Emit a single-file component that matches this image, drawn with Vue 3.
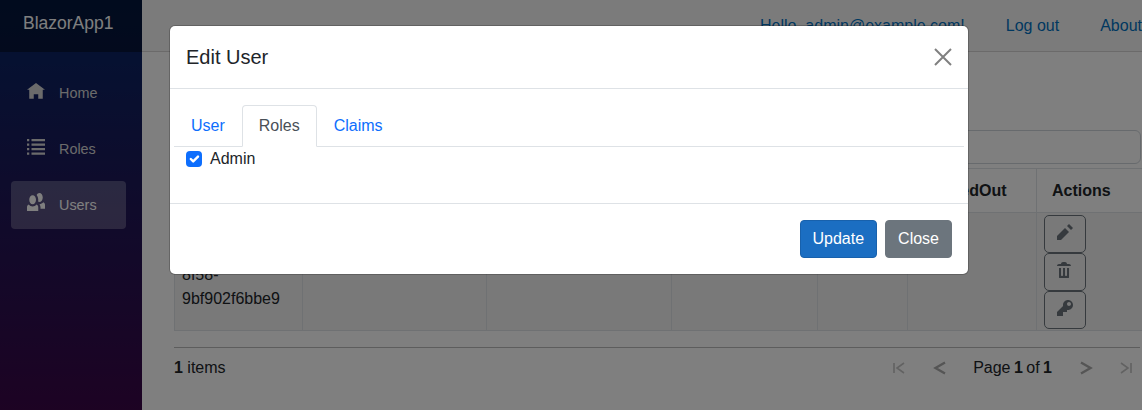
<script setup>
const columns = [
  { label: 'Id', width: 128 },
  { label: 'UserName', width: 184 },
  { label: 'Email', width: 185 },
  { label: 'Phone', width: 146 },
  { label: '2FA', width: 90 },
  { label: 'LockedOut', width: 129 },
  { label: 'Actions', width: 106 }
]
const icons = {
  pencil: 'M6 0l-1 1 2 2 1-1-2-2zm-2 2l-4 4v2h2l4-4-2-2z',
  trash: 'M3 0c-.55 0-1 .45-1 1h-1c-.55 0-1 .45-1 1h7c0-.55-.45-1-1-1h-1c0-.55-.45-1-1-1h-1zm-2 3v4.81c0 .11.08.19.19.19h4.63c.11 0 .19-.08.19-.19v-4.81h-1v3.5c0 .28-.22.5-.5.5s-.5-.22-.5-.5v-3.5h-1v3.5c0 .28-.22.5-.5.5s-.5-.22-.5-.5v-3.5h-1z',
  key: 'M5.5 0c-1.38 0-2.5 1.12-2.5 2.5 0 .16 0 .32.03.47l-3.03 3.03v2h3v-2h2v-1l.03-.03c.15.03.31.03.47.03 1.38 0 2.5-1.12 2.5-2.5s-1.12-2.5-2.5-2.5zm.5 1c.55 0 1 .45 1 1s-.45 1-1 1-1-.45-1-1 .45-1 1-1z'
}
const nav = [
  { label: 'Home', d: 'M4 0l-4 3h1v4h2v-2h2v2h2v-4.03l1 .03-4-3z', active: false },
  { label: 'Roles', d: 'M0 0h1v1h-1zm2 0h6v1h-6zm-2 2h1v1h-1zm2 0h6v1h-6zm-2 2h1v1h-1zm2 0h6v1h-6zm-2 2h1v1h-1zm2 0h6v1h-6z', active: false },
  { label: 'Users', d: 'M5.5 0c-.51 0-.95.35-1.22.88.45.54.72 1.28.72 2.13 0 .29-.03.55-.09.81.19.11.38.19.59.19.83 0 1.5-.9 1.5-2s-.67-2-1.5-2zm-3 1c-.83 0-1.5.9-1.5 2s.67 2 1.5 2 1.5-.9 1.5-2-.67-2-1.5-2zm4.750 3.160c-.43.51-1.020.82-1.690.84.27.38.44.84.44 1.340v.66h2v-1.660c0-.52-.31-.97-.75-1.190zm-6.500 1c-.44.22-.75.67-.75 1.190v1.660h5v-1.660c0-.52-.31-.97-.75-1.190-.45.53-1.060.84-1.750.84s-1.300-.32-1.750-.84z', active: true }
]
</script>

<template>
  <div class="page">
    <aside class="sidebar">
      <div class="brand">BlazorApp1</div>
      <nav class="nav">
        <a v-for="item in nav" :key="item.label" class="nav-link" :class="{ active: item.active }">
          <svg class="nav-icon" viewBox="0 0 8 8"><path :d="item.d" /></svg>
          {{ item.label }}
        </a>
      </nav>
    </aside>
    <main class="main">
      <header class="topbar">
        <a class="hello">Hello, admin@example.com!</a>
        <a class="logout">Log out</a>
        <a class="about">About</a>
      </header>
      <section class="content">
        <div class="title-space"></div>
        <div class="search"></div>
        <table class="grid">
          <colgroup>
            <col v-for="c in columns" :key="c.label" :style="{ width: c.width + 'px' }" />
          </colgroup>
          <thead>
            <tr><th v-for="c in columns" :key="c.label">{{ c.label }}</th></tr>
          </thead>
          <tbody>
            <tr>
              <td class="id">4c1e7a02-<br />52bd-<br />8f58-<br />9bf902f6bbe9</td>
              <td></td><td></td><td></td><td></td><td></td>
              <td class="actions">
                <button v-for="(d, name) in icons" :key="name" class="act">
                  <svg viewBox="0 0 8 8" class="act-icon"><path :d="d" /></svg>
                </button>
              </td>
            </tr>
          </tbody>
        </table>
        <div class="pager">
          <div><b>1</b> items</div>
          <div class="pages">
            <svg class="pg first" viewBox="0 0 14 14"><path d="M2 2v10M12 2 5 7l7 5" /></svg>
            <svg class="pg prev" viewBox="0 0 14 14"><path d="M12 1.500 2.500 7l9.500 5.500" /></svg>
            <span class="pagetext">Page <b>1</b> of <b>1</b></span>
            <svg class="pg next" viewBox="0 0 14 14"><path d="M2 1.500 11.500 7 2 12.500" /></svg>
            <svg class="pg last" viewBox="0 0 14 14"><path d="M2 2l7 5-7 5M12 2v10" /></svg>
          </div>
        </div>
      </section>
    </main>

    <div class="backdrop">
      <div class="modal">
        <div class="modal-header">
          <span class="modal-title">Edit User</span>
          <svg class="close" viewBox="0 0 18 18"><path d="M1 1l16 16M17 1 1 17" /></svg>
        </div>
        <div class="modal-body">
          <ul class="tabs">
            <li class="tab">User</li>
            <li class="tab on">Roles</li>
            <li class="tab">Claims</li>
          </ul>
          <label class="check">
            <span class="box">
              <svg viewBox="0 0 20 20"><path d="M6 10l3 3 6-6" /></svg>
            </span>
            Admin
          </label>
        </div>
        <div class="modal-footer">
          <button class="btn primary">Update</button>
          <button class="btn secondary">Close</button>
        </div>
      </div>
    </div>
  </div>
</template>

<style>
html, body { margin: 0; height: 100%; overflow: hidden; }
</style>

<style scoped>
.page {
  position: relative;
  display: flex;
  width: 1142px;
  height: 410px;
  overflow: hidden;
  font-family: "Liberation Sans", Arial, sans-serif;
  font-size: 16px;
  line-height: 24px;
  color: #212529;
  background: #fff;
}
.sidebar {
  flex: 0 0 142px;
  background: linear-gradient(180deg, #052767 0%, #3a0647 100%);
}
.brand {
  height: 52px;
  line-height: 47px;
  padding-left: 23px;
  font-size: 17.5px;
  color: #fff;
  background: rgba(0, 0, 0, .4);
}
.nav { padding: 13px 16px 0 11px; display: flex; flex-direction: column; gap: 8px; margin-top: 4px; }
.nav-link {
  display: flex;
  align-items: center;
  height: 48px;
  padding-left: 16px;
  border-radius: 4px;
  font-size: 14.4px;
  color: #d7d7d7;
}
.nav-link.active { background: rgba(255, 255, 255, .25); color: #fff; }
.nav-icon { width: 18px; height: 18px; margin: -3px 14px 0 0; fill: currentColor; }
.nav-link.active .nav-icon { margin-top: -6px; }
.main { flex: 1; min-width: 0; }
.topbar {
  display: flex;
  align-items: center;
  height: 52px;
  box-sizing: border-box;
  border-bottom: 1px solid #d6d5d5;
  background: #f7f7f7;
  padding-left: 618px;
  white-space: nowrap;
}
.topbar a { color: #0071c1; }
.hello { margin-right: 41px; }
.logout { margin-right: 41px; }
.content { padding: 0 0 0 32px; }
.title-space { height: 78px; }
.search {
  box-sizing: border-box;
  width: 967px;
  height: 34px;
  border: 1px solid #ced4da;
  border-radius: 6px;
}
.grid {
  margin-top: 4px;
  table-layout: fixed;
  border-collapse: collapse;
  width: 968px;
}
.grid th, .grid td {
  border: 1px solid #dee2e6;
  padding: 0;
  vertical-align: top;
}
.grid th {
  height: 43px;
  padding: 0 15px;
  text-align: left;
  vertical-align: middle;
  font-weight: 700;
}
.grid tbody tr { background: rgba(0, 0, 0, .05); }
.grid td.id { padding: 2px 7px 0; }
.grid td.actions { padding: 2px 7px 1px; }
.act {
  display: block;
  box-sizing: border-box;
  width: 42px;
  height: 38px;
  padding: 0;
  border: 1px solid #6c757d;
  border-radius: 5px;
  background: transparent;
}
.act-icon { display: block; width: 16px; height: 16px; margin: -4px auto 0; fill: #6c757d; }
.pager {
  display: flex;
  align-items: center;
  justify-content: space-between;
  box-sizing: border-box;
  width: 966px;
  height: 40px;
  margin-top: 16px;
  padding: 0 7px 0 0;
  border-top: 1px solid #bbb;
}
.pages { display: flex; align-items: center; }
.pagetext { margin: 0 27px 0 26px; word-spacing: -1px; }
.pg { width: 14px; height: 14px; fill: none; stroke: #aaa; stroke-width: 2.4; }
.first { margin-right: 27px; stroke: #c4c4c4; stroke-width: 1.6; }
.last { margin-left: 26px; stroke: #c4c4c4; stroke-width: 1.6; }
.backdrop {
  position: absolute;
  inset: 0;
  background: rgba(0, 0, 0, .5);
  padding: 26px 0 0 170px;
}
.modal {
  box-sizing: border-box;
  width: 798px;
  height: 248px;
  display: flex;
  flex-direction: column;
  background: #fff;
  border-radius: 5px;
  box-shadow: 0 0 0 1px rgba(0, 0, 0, .2);
}
.modal-header {
  display: flex;
  align-items: center;
  justify-content: space-between;
  height: 63px;
  box-sizing: border-box;
  padding: 0 16px;
  border-bottom: 1px solid #dee2e6;
}
.modal-title { font-size: 20px; }
.close { width: 18px; height: 18px; fill: none; stroke: #808080; stroke-width: 2; }
.modal-body { flex: 1; padding: 16px 4px 0; }
.tabs {
  display: flex;
  list-style: none;
  margin: 0;
  padding: 0;
  height: 42px;
  box-sizing: border-box;
  border-bottom: 1px solid #dee2e6;
}
.tab {
  height: 42px;
  box-sizing: border-box;
  padding: 8px 16px;
  border: 1px solid transparent;
  border-radius: 4px 4px 0 0;
  color: #0d6efd;
}
.tab.on {
  color: #495057;
  background: #fff;
  border-color: #dee2e6 #dee2e6 #fff;
}
.check { display: flex; align-items: center; height: 24px; padding-left: 12px; color: #212529; }
.box {
  display: block;
  width: 16px;
  height: 16px;
  margin-right: 8px;
  border-radius: 4px;
  background: #0d6efd;
}
.box svg { display: block; fill: none; stroke: #fff; stroke-width: 3; stroke-linecap: round; stroke-linejoin: round; }
.modal-footer {
  display: flex;
  justify-content: flex-end;
  gap: 8px;
  height: 71px;
  box-sizing: border-box;
  padding: 16px;
  border-top: 1px solid #dee2e6;
}
.btn {
  height: 38px;
  padding: 0 12px;
  border: 1px solid transparent;
  border-radius: 4px;
  font: inherit;
  color: #fff;
}
.primary { background: #1b6ec2; border-color: #1861ac; }
.secondary { background: #6c757d; border-color: #6c757d; }
</style>
